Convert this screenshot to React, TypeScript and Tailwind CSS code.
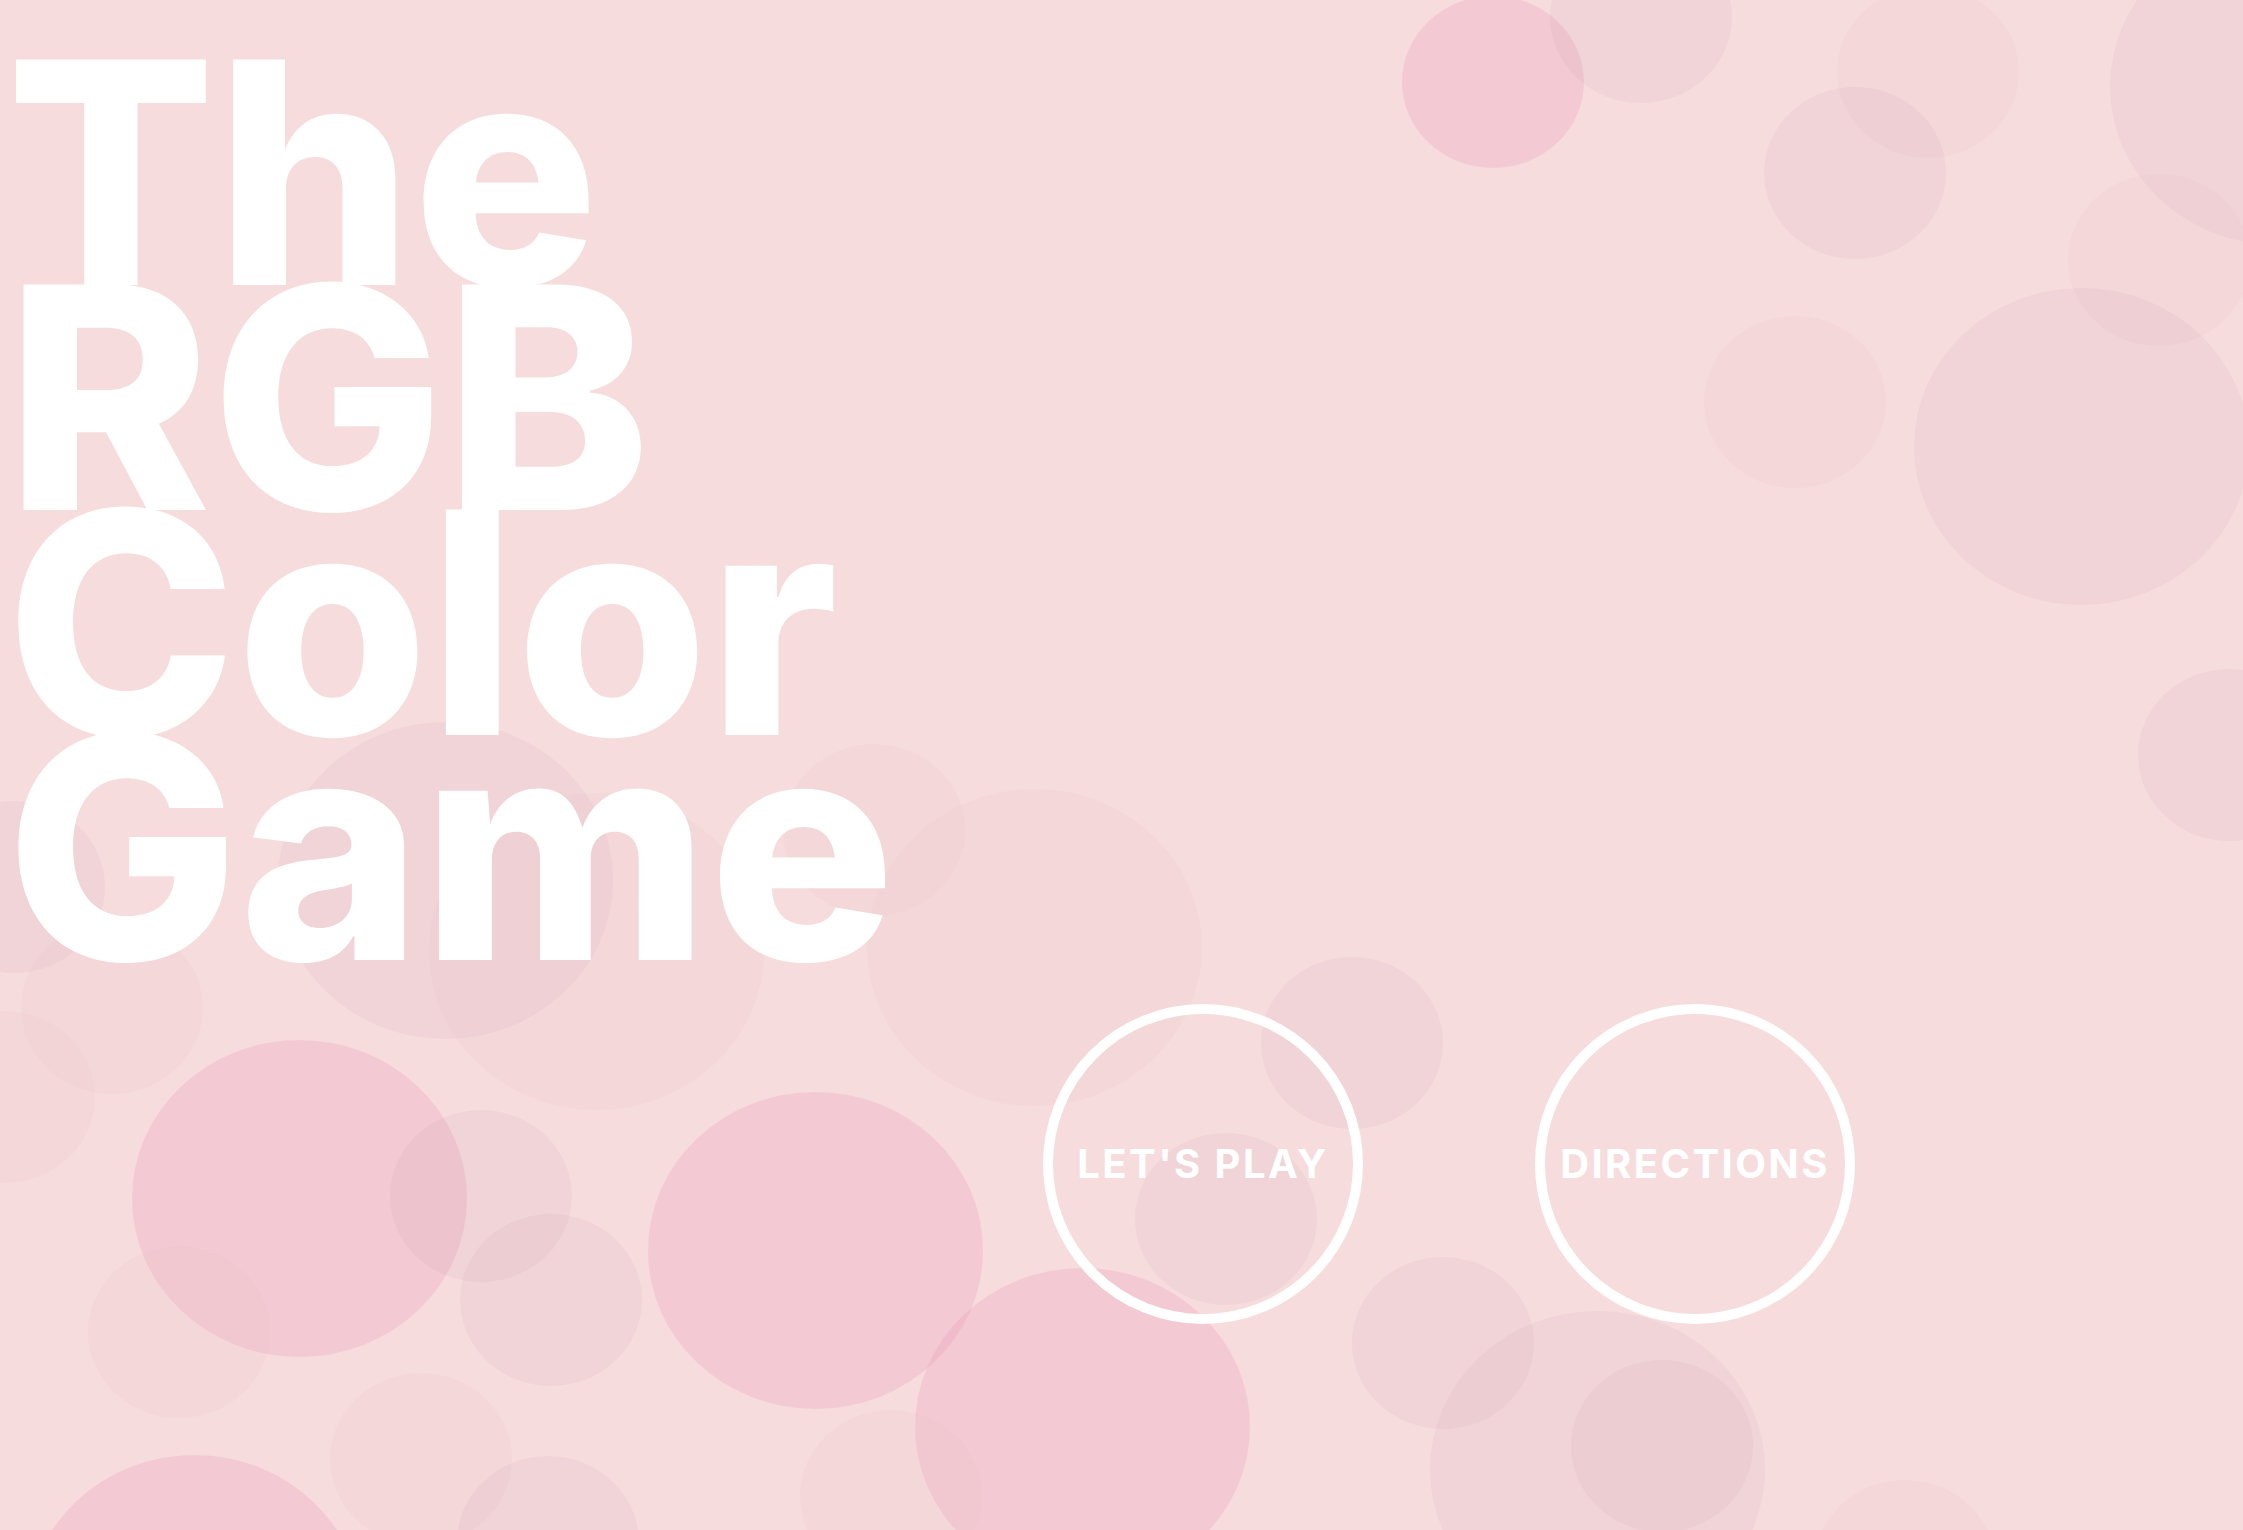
const PINK = 'bg-[rgba(228,128,172,0.19)]';
const MAUVE = 'bg-[rgba(200,160,180,0.13)]';
const LIGHT = 'bg-[rgba(230,180,195,0.11)]';

const SMALL = 'w-[182px] h-[172px]';
const BIG = 'w-[335px] h-[317px]';

// decorative bubbles floating behind everything
const bubbles = [
  `${PINK} ${SMALL} left-[1402px] top-[-4px]`,
  `${MAUVE} ${SMALL} left-[1550px] top-[-69px]`,
  `${LIGHT} ${SMALL} left-[1837px] top-[-14px]`,
  `${MAUVE} ${SMALL} left-[1764px] top-[87px]`,
  `${MAUVE} ${BIG} left-[2110px] top-[-72px]`,
  `${LIGHT} ${SMALL} left-[2068px] top-[174px]`,
  `${LIGHT} ${SMALL} left-[1704px] top-[316px]`,
  `${MAUVE} ${BIG} left-[1914px] top-[288px]`,
  `${MAUVE} ${SMALL} left-[2138px] top-[669px]`,
  `${MAUVE} ${BIG} left-[278px] top-[722px]`,
  `${LIGHT} ${BIG} left-[429px] top-[793px]`,
  `${LIGHT} ${SMALL} left-[783px] top-[744px]`,
  `${LIGHT} ${BIG} left-[867px] top-[789px]`,
  `${MAUVE} ${SMALL} left-[-77px] top-[801px]`,
  `${LIGHT} ${SMALL} left-[21px] top-[922px]`,
  `${LIGHT} ${SMALL} left-[-87px] top-[1011px]`,
  `${MAUVE} ${SMALL} left-[1261px] top-[957px]`,
  `${PINK} ${BIG} left-[132px] top-[1040px]`,
  `${MAUVE} ${SMALL} left-[390px] top-[1110px]`,
  `${MAUVE} ${SMALL} left-[460px] top-[1214px]`,
  `${LIGHT} ${SMALL} left-[88px] top-[1246px]`,
  `${PINK} ${BIG} left-[648px] top-[1092px]`,
  `${MAUVE} ${SMALL} left-[1135px] top-[1133px]`,
  `${PINK} ${BIG} left-[915px] top-[1268px]`,
  `${MAUVE} ${SMALL} left-[1352px] top-[1257px]`,
  `${MAUVE} ${BIG} left-[1430px] top-[1311px]`,
  `${MAUVE} ${SMALL} left-[1571px] top-[1360px]`,
  `${LIGHT} ${SMALL} left-[330px] top-[1373px]`,
  `${MAUVE} ${SMALL} left-[457px] top-[1456px]`,
  `${LIGHT} ${SMALL} left-[800px] top-[1410px]`,
  `${PINK} ${BIG} left-[27px] top-[1455px]`,
  `${LIGHT} ${SMALL} left-[1814px] top-[1480px]`,
];

const RingButton = ({ label }: { label: string }) => (
  <button className="flex h-[320px] w-[320px] items-center justify-center rounded-full border-[10px] border-white text-[40px] font-bold uppercase tracking-[0.06em] text-white">
    {label}
  </button>
);

export default function App() {
  return (
    <div className="relative h-[1530px] w-full overflow-hidden bg-[#f7dcdd] font-['Inter','Liberation_Sans',sans-serif]">
      {bubbles.map((cls, i) => (
        <div key={i} className={`absolute rounded-[50%] ${cls}`} />
      ))}

      <div className="relative flex flex-col">
        <h1 className="ml-[6px] mt-[60px] text-[310px] font-extrabold leading-[225px] tracking-[0em] text-white">
          The
          <br />
          RGB
          <br />
          Color
          <br />
          Game
        </h1>

        <div className="ml-[1043px] mt-[44px] flex gap-[172px]">
          <RingButton label="Let's Play" />
          <RingButton label="Directions" />
        </div>
      </div>
    </div>
  );
}
